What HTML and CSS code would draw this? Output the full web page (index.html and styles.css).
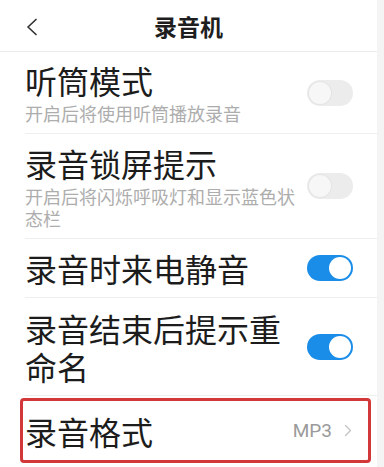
FILE: index.html
```html
<!DOCTYPE html>
<html lang="zh-CN">
<head>
<meta charset="utf-8">
<title>录音机</title>
<link rel="stylesheet" href="styles.css">
</head>
<body>
<div class="screen">
  <div class="main">
    <header class="header">
      <span class="back">
        <svg width="12" height="18" viewBox="0 0 12 18"><polyline points="10,1.5 2,9 10,16.5" fill="none" stroke="#333" stroke-width="1.7" stroke-linecap="round" stroke-linejoin="round"/></svg>
      </span>
      <h1 class="title">录音机</h1>
      <span class="spacer"></span>
    </header>
    <div class="list">
      <div class="row row-1">
        <div class="text">
          <div class="label">听筒模式</div>
          <div class="desc">开启后将使用听筒播放录音</div>
        </div>
        <span class="toggle"><span class="knob"></span></span>
      </div>
      <div class="row row-2">
        <div class="text">
          <div class="label">录音锁屏提示</div>
          <div class="desc">开启后将闪烁呼吸灯和显示蓝色状态栏</div>
        </div>
        <span class="toggle"><span class="knob"></span></span>
      </div>
      <div class="row row-3">
        <div class="text">
          <div class="label">录音时来电静音</div>
        </div>
        <span class="toggle on"><span class="knob"></span></span>
      </div>
      <div class="row row-4">
        <div class="text">
          <div class="label">录音结束后提示重命名</div>
        </div>
        <span class="toggle on"><span class="knob"></span></span>
      </div>
      <div class="format">
        <div class="label">录音格式</div>
        <div class="value">
          <span class="mp3">MP3</span>
          <svg width="8" height="13" viewBox="0 0 8 13"><polyline points="1.5,1.5 6.5,6.5 1.5,11.5" fill="none" stroke="#c4c4c4" stroke-width="1.4" stroke-linecap="round" stroke-linejoin="round"/></svg>
        </div>
      </div>
    </div>
  </div>
  <div class="edge"></div>
</div>
</body>
</html>
```
FILE: styles.css
```css
html, body {
  margin: 0;
  padding: 0;
  background: #ffffff;
}
body {
  font-family: "Noto Sans CJK SC", "Noto Sans", sans-serif;
  color: #1c1c1c;
}
.screen {
  display: flex;
  width: 384px;
  height: 467px;
  overflow: hidden;
}
.main {
  width: 377px;
  background: #ffffff;
  flex: none;
}
.edge {
  flex: 1;
  background: #f4f4f4;
}
.header {
  height: 51px;
  border-bottom: 1px solid #ececec;
  display: grid;
  grid-template-columns: 60px 1fr 60px;
  align-items: center;
}
.back {
  display: flex;
  padding-left: 26px;
  padding-top: 2px;
}
.title {
  margin: 0;
  text-align: center;
  font-size: 23px;
  font-weight: 700;
  line-height: 30px;
  color: #1e1e1e;
}
.row {
  display: flex;
  align-items: center;
  margin-left: 25px;
  padding-right: 24px;
  border-bottom: 1px solid #efefef;
}
.row-1 { height: 81px; }
.row-2 { height: 104px; }
.row-3 { height: 58px; }
.row-4 { height: 97px; }
.text {
  width: 280px;
}
.label {
  font-size: 32px;
  line-height: 38px;
  color: #1c1c1c;
}
.desc {
  font-size: 18px;
  line-height: 22px;
  color: #adadad;
  margin-top: 3px;
}
.toggle {
  margin-left: auto;
  width: 46px;
  height: 26px;
  border-radius: 13px;
  background: #ececec;
  display: flex;
  align-items: center;
  padding: 0 2px;
  box-sizing: border-box;
}
.knob {
  width: 22px;
  height: 22px;
  border-radius: 50%;
  background: #f7f7f7;
  box-shadow: 0 0 0 1px #e4e4e4;
}
.toggle.on {
  background: #1a8de8;
  justify-content: flex-end;
}
.toggle.on .knob {
  background: #ffffff;
  box-shadow: none;
}
.format {
  margin: 2px 6px 0 20px;
  height: 65px;
  box-sizing: border-box;
  border: 3px solid #d2373a;
  border-radius: 4px;
  display: flex;
  align-items: center;
  padding: 0 16px 0 2px;
}
.value {
  margin-left: auto;
  display: flex;
  align-items: center;
  gap: 12px;
}
.mp3 {
  font-family: Roboto, "Liberation Sans", sans-serif;
  font-size: 19px;
  color: #9a9a9a;
}
```
